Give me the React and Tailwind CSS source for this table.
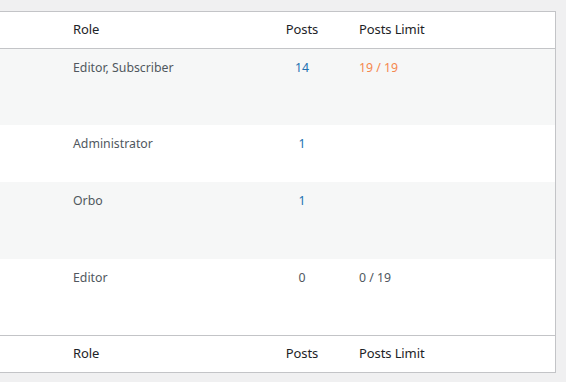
const rows = [
  { role: 'Editor, Subscriber', posts: '14', link: true, limit: '19 / 19', over: true, h: 'h-[76px]' },
  { role: 'Administrator', posts: '1', link: true, limit: '', h: 'h-[57px]' },
  { role: 'Orbo', posts: '1', link: true, limit: '', h: 'h-[77px]' },
  { role: 'Editor', posts: '0', link: false, limit: '0 / 19', h: 'h-[76px]' },
];

const cols = 'grid grid-cols-[63px_192px_94px_1fr]';

function HeadRow({ className }) {
  return (
    <div className={`${cols} h-[37px] items-center text-[13px] tracking-[-0.1px] text-[#1d2327] ${className}`}>
      <div />
      <div className="px-[10px]">Role</div>
      <div className="px-[10px] text-center">Posts</div>
      <div className="px-[10px]">Posts Limit</div>
    </div>
  );
}

export default function App() {
  return (
    <div
      className="w-[566px] h-[382px] bg-[#f0f0f1] pt-[11px] overflow-hidden"
      style={{ fontFamily: '"Noto Sans", "Open Sans", sans-serif' }}
    >
      <div className="w-[556px] bg-white border-t border-r border-b border-[#c3c4c7]">
        <HeadRow className="border-b border-[#c3c4c7]" />
        {rows.map((r, i) => (
          <div
            key={i}
            className={`${cols} ${r.h} text-[12.3px] leading-[19.5px] text-[#50575e] pt-[9px] ${
              i % 2 === 0 ? 'bg-[#f6f7f7]' : 'bg-white'
            }`}
          >
            <div />
            <div className="px-[10px]">{r.role}</div>
            <div className={`px-[10px] text-center ${r.link ? 'text-[#2271b1]' : ''}`}>{r.posts}</div>
            <div className={`px-[10px] ${r.over ? 'text-[#f5874d]' : ''}`}>{r.limit}</div>
          </div>
        ))}
        <HeadRow className="border-t border-[#c3c4c7]" />
      </div>
    </div>
  );
}
